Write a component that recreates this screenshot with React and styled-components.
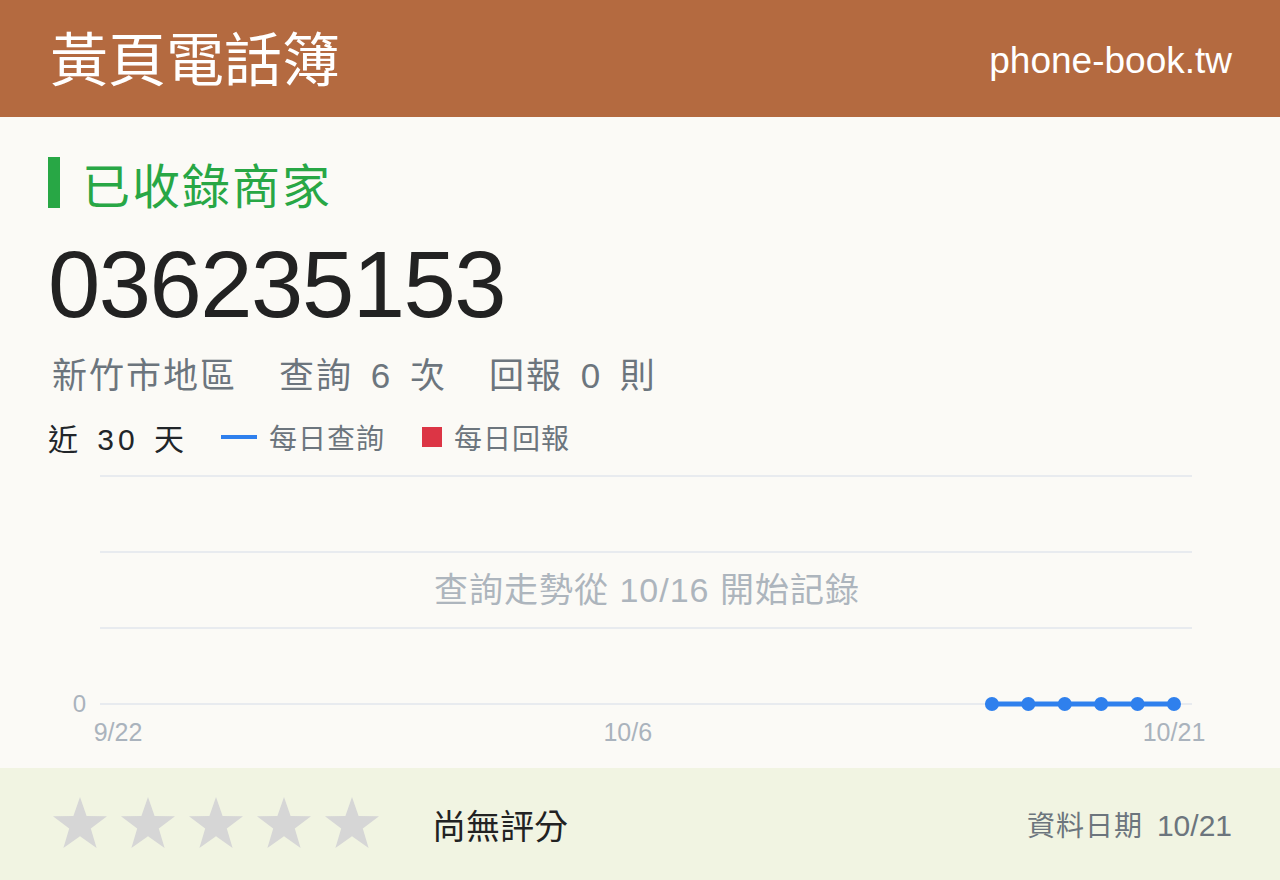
import styled, { createGlobalStyle } from 'styled-components';

const GlobalStyle = createGlobalStyle`
  html, body {
    margin: 0;
    padding: 0;
    background: #fbfaf6;
  }
  body {
    font-family: "Liberation Sans", "Noto Sans CJK TC", sans-serif;
  }
`;

const Page = styled.div`
  width: 1280px;
  height: 880px;
  display: flex;
  flex-direction: column;
  background: #fbfaf6;
  overflow: hidden;
`;

const Header = styled.header`
  height: 117px;
  flex-shrink: 0;
  background: #b46a40;
  display: flex;
  align-items: center;
  justify-content: space-between;
  padding: 0 48px 0 50px;
  color: #ffffff;
`;

const Brand = styled.h1`
  margin: 0;
  padding-bottom: 6px;
  font-family: "Noto Sans CJK TC", sans-serif;
  font-weight: 400;
  font-size: 58px;
  line-height: 1;
`;

const Domain = styled.span`
  padding-top: 4px;
  font-family: "Liberation Sans", sans-serif;
  font-size: 37px;
  line-height: 1;
`;

const Main = styled.main`
  flex: 1;
  min-height: 0;
  display: flex;
  flex-direction: column;
  padding: 40px 48px 0;
`;

const Status = styled.h2`
  margin: 0;
  height: 51px;
  display: flex;
  align-items: center;
  border-left: 12px solid #28a745;
  padding-left: 22px;
  font-family: "Noto Sans CJK TC", sans-serif;
  font-weight: 400;
  font-size: 48px;
  letter-spacing: 2px;
  color: #28a745;
`;

const Number = styled.div`
  margin-top: 30px;
  font-family: "Liberation Sans", sans-serif;
  font-size: 94px;
  letter-spacing: -1.5px;
  line-height: 1;
  color: #222222;
`;

const Stats = styled.div`
  margin-top: 20px;
  height: 40px;
  display: flex;
  align-items: center;
  padding-left: 4px;
  font-size: 35px;
  letter-spacing: 2px;
  word-spacing: 6px;
  color: #6c757d;
`;

const Stat = styled.span`
  margin-left: ${(props) => (props.first ? '0' : '42px')};
  white-space: pre;
`;

const Legend = styled.div`
  margin-top: 27px;
  height: 36px;
  display: flex;
  align-items: center;
`;

const Period = styled.span`
  font-size: 30px;
  letter-spacing: 4px;
  word-spacing: 3px;
  color: #212529;
  white-space: pre;
  margin-right: 33px;
`;

const LegendItem = styled.span`
  display: flex;
  align-items: center;
  gap: 12px;
  margin-right: 37px;
  font-size: 28px;
  letter-spacing: 1px;
  color: #6c757d;
`;

const Swatch = styled.i`
  display: block;
  width: ${(props) => (props.square ? '20px' : '36px')};
  height: ${(props) => (props.square ? '20px' : '4px')};
  background: ${(props) => props.color};
`;

const ChartBox = styled.div`
  margin-top: 11px;
  flex: 1;
  min-height: 0;

  svg {
    display: block;
  }
`;

const Footer = styled.footer`
  height: 112px;
  flex-shrink: 0;
  background: #f1f4e2;
  display: flex;
  align-items: center;
  padding: 0 48px 0 52px;
`;

const Stars = styled.div`
  display: flex;
  gap: 12px;
`;

const Rating = styled.span`
  margin-left: 52px;
  font-size: 34px;
  color: #222222;
`;

const DataDate = styled.div`
  margin-left: auto;
  display: flex;
  align-items: baseline;
  gap: 14px;
  color: #6c757d;
`;

const DateLabel = styled.span`
  font-size: 28px;
  letter-spacing: 1px;
`;

const DateValue = styled.span`
  font-size: 30px;
`;

const Star = () => (
  <svg width="56" height="56" viewBox="0 0 56 56">
    <polygon
      points="28,1 34.6,19.9 55,20.3 38.8,32.5 44.6,52 28,40.3 11.4,52 17.2,32.5 1,20.3 21.4,19.9"
      fill="#d6d6d6"
    />
  </svg>
);

// 30 days, 9/22 .. 10/21; recording started on 10/16 (index 24)
const X0 = 118;
const STEP = (1174 - 118) / 29;
const xAt = (i) => X0 + i * STEP;
const points = [24, 25, 26, 27, 28, 29].map((i) => ({ x: xAt(i), y: 238 }));

const TrendChart = () => (
  <svg width="1184" height="302" viewBox="48 0 1184 302">
    {[10, 86, 162, 238].map((y) => (
      <line key={y} x1="100" x2="1192" y1={y} y2={y} stroke="#e8ebef" strokeWidth="2" />
    ))}
    <text x="86" y="246" textAnchor="end" fontSize="24" fill="#aab3bd" fontFamily="Liberation Sans, sans-serif">
      0
    </text>
    {[
      ['9/22', 0],
      ['10/6', 14],
      ['10/21', 29],
    ].map(([label, i]) => (
      <text
        key={label}
        x={xAt(i)}
        y="275"
        textAnchor="middle"
        fontSize="25"
        fill="#aab3bd"
        fontFamily="Liberation Sans, sans-serif"
      >
        {label}
      </text>
    ))}
    <text
      x="647"
      y="136"
      textAnchor="middle"
      fontSize="34"
      letterSpacing="1"
      fill="#adb5bd"
      fontFamily="Liberation Sans, Noto Sans CJK TC, sans-serif"
    >
      查詢走勢從 10/16 開始記錄
    </text>
    <polyline
      points={points.map((p) => `${p.x},${p.y}`).join(' ')}
      fill="none"
      stroke="#2f80ed"
      strokeWidth="5"
    />
    {points.map((p) => (
      <circle key={p.x} cx={p.x} cy={p.y} r="7" fill="#2f80ed" />
    ))}
  </svg>
);

const App = () => {
  return (
    <Page>
      <GlobalStyle />
      <Header>
        <Brand>黃頁電話簿</Brand>
        <Domain>phone-book.tw</Domain>
      </Header>
      <Main>
        <Status>已收錄商家</Status>
        <Number>036235153</Number>
        <Stats>
          <Stat first>新竹市地區</Stat>
          <Stat>查詢 6 次</Stat>
          <Stat>回報 0 則</Stat>
        </Stats>
        <Legend>
          <Period>近 30 天</Period>
          <LegendItem>
            <Swatch color="#2f80ed" />
            每日查詢
          </LegendItem>
          <LegendItem>
            <Swatch square color="#dc3545" />
            每日回報
          </LegendItem>
        </Legend>
        <ChartBox>
          <TrendChart />
        </ChartBox>
      </Main>
      <Footer>
        <Stars>
          {[0, 1, 2, 3, 4].map((i) => (
            <Star key={i} />
          ))}
        </Stars>
        <Rating>尚無評分</Rating>
        <DataDate>
          <DateLabel>資料日期</DateLabel>
          <DateValue>10/21</DateValue>
        </DataDate>
      </Footer>
    </Page>
  );
};

export default App;
